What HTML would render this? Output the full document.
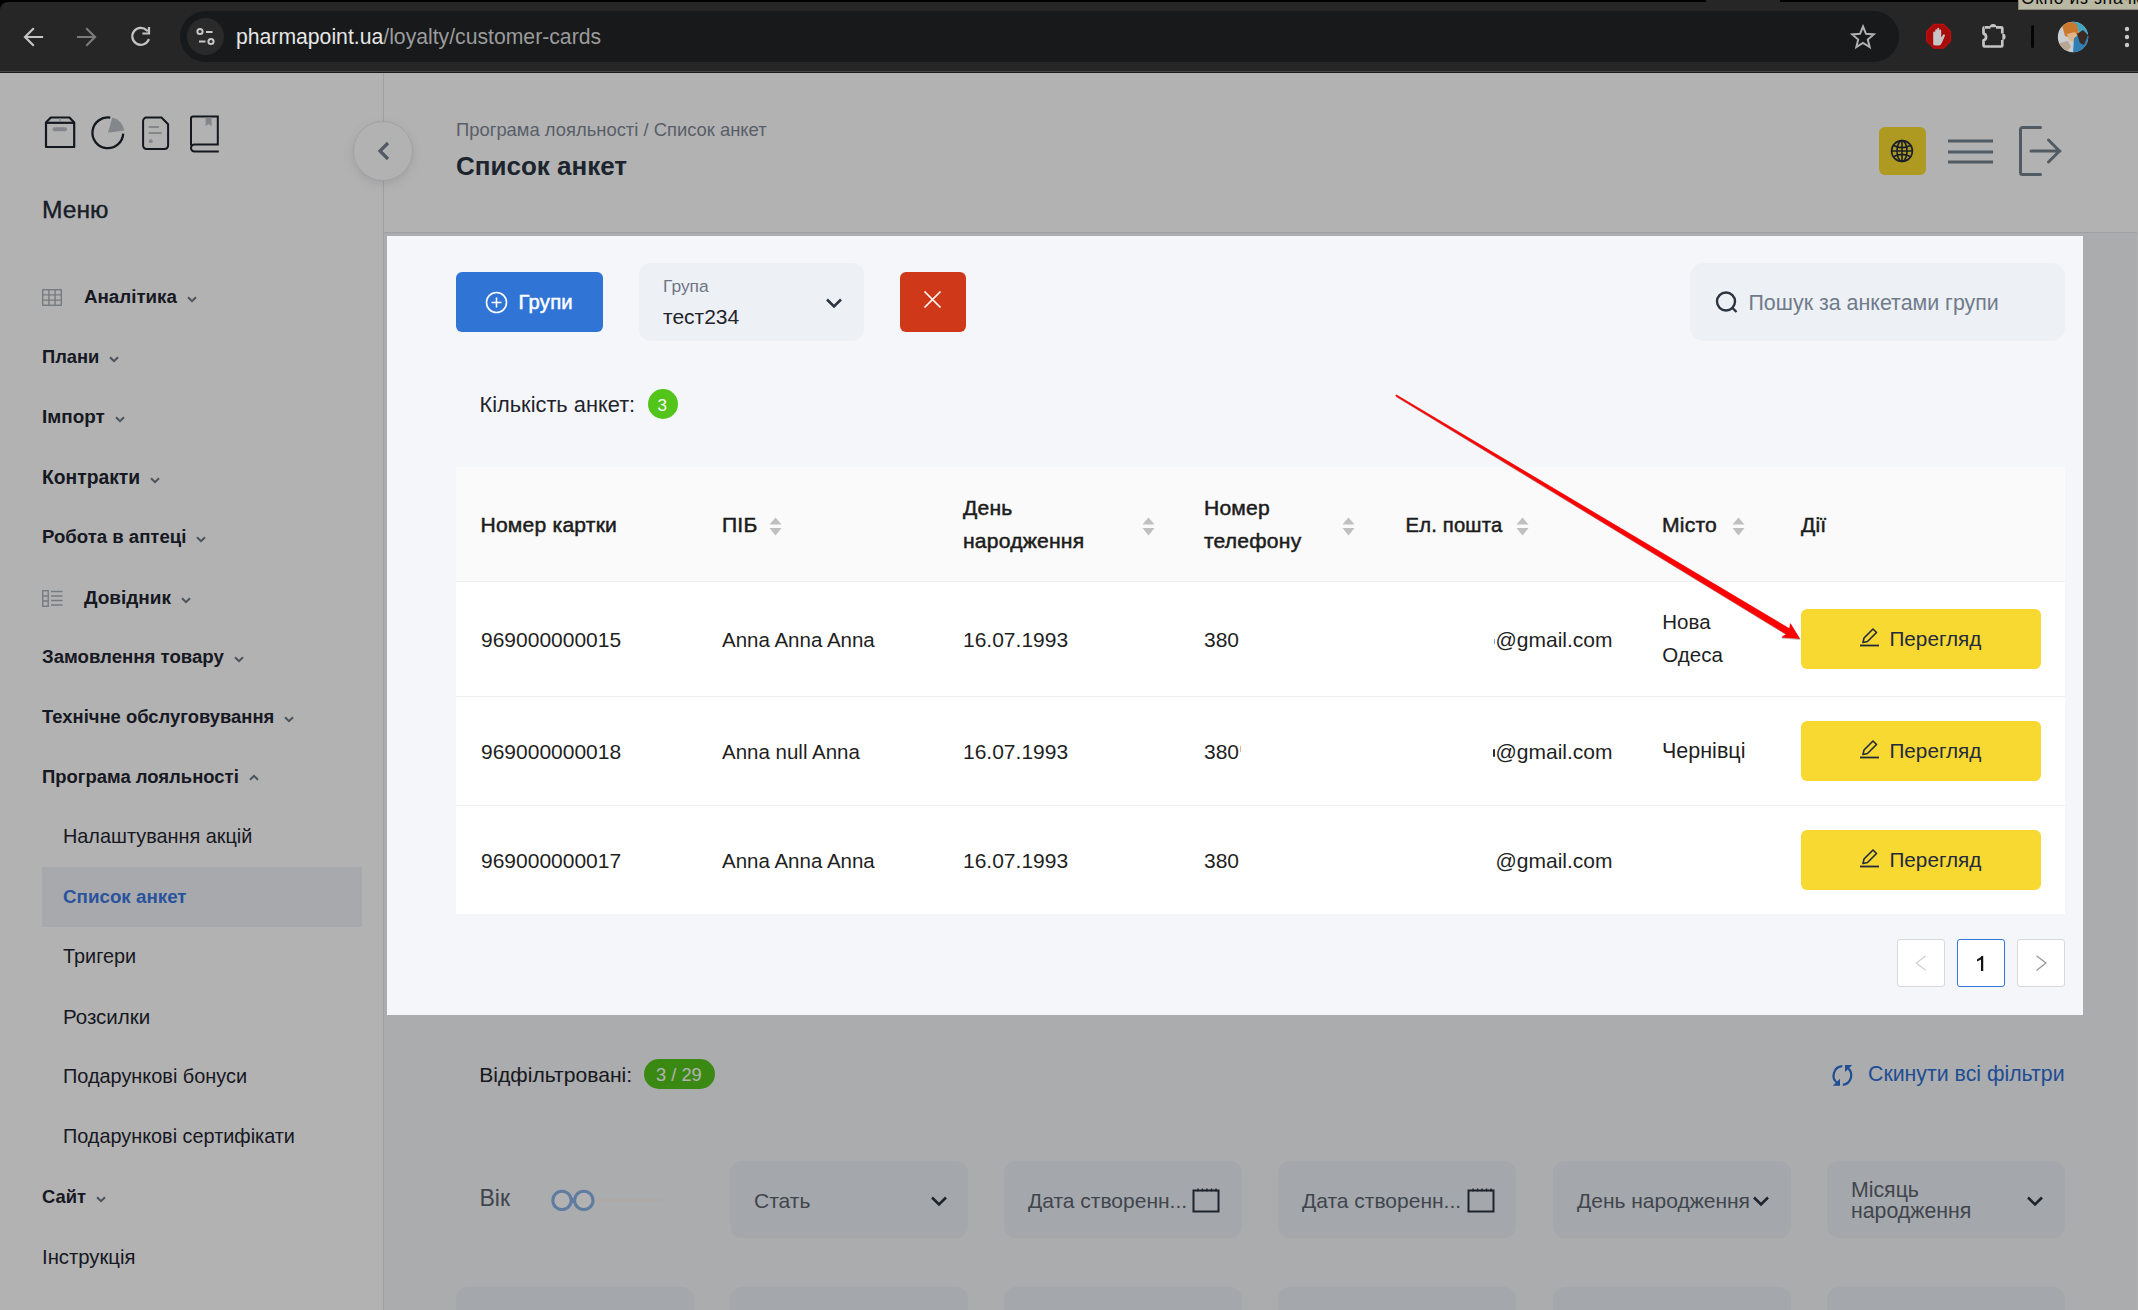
<!DOCTYPE html>
<html><head><meta charset="utf-8">
<style>
*{box-sizing:border-box;margin:0;padding:0}
html,body{width:2138px;height:1310px;overflow:hidden;background:#f5f6f9;font-family:"Liberation Sans",sans-serif;color:#212934}
.a{position:absolute}
.t{position:absolute;white-space:nowrap}
#chrome{position:absolute;left:0;top:0;width:2138px;height:72px;background:#000}
#toolbar{position:absolute;left:0;top:2px;width:2138px;height:70px;background:#262626;border-radius:8px 0 0 0}
#tbline{position:absolute;left:0;top:71px;width:2138px;height:1px;background:#474747}
#omni{position:absolute;left:180px;top:11px;width:1719px;height:51px;border-radius:26px;background:#18191b}
#siteinfo{position:absolute;left:187px;top:18px;width:37px;height:37px;border-radius:50%;background:#2a2a2a}
#url{position:absolute;left:236px;top:24px;font-size:21.2px;line-height:26px;color:#e6e6e6;white-space:nowrap}
#url span{color:#9b9b9b}
#tooltip{position:absolute;left:2018px;top:0;width:120px;height:10px;background:#b9b8a2;border-left:1px solid #8c8b80;border-bottom:1px solid #8c8b80;overflow:hidden}
#tooltip div{position:absolute;left:2px;top:-10px;font-size:17.5px;line-height:17.5px;letter-spacing:0.6px;color:#0a0a0a;white-space:nowrap}
#page{position:absolute;left:0;top:72px;width:2138px;height:1238px;background:#f5f6f9}
#sidebar{position:absolute;left:0;top:0;width:384px;height:1238px;background:#fff;border-right:1px solid #e2e5ea}
#header{position:absolute;left:384px;top:0;width:1754px;height:161px;background:#fff;border-bottom:1px solid #e2e5ea}
#overlay{position:absolute;left:0;top:72px;width:2138px;height:1238px;background:rgba(0,0,0,0.3);z-index:10}
#card{position:absolute;left:387px;top:236px;width:1696px;height:779px;background:#f5f6fa;z-index:20}
.chev{display:inline-block;margin-left:10px;vertical-align:middle;position:relative;top:1px}
.sort{position:absolute;width:12px;height:18px}
.btny{position:absolute;left:1414px;width:240px;height:60px;background:#f7d931;border-radius:6px}
.pg{position:absolute;width:48px;height:48px;border:1px solid #d9d9d9;border-radius:4px;background:#fff}
.fsel{position:absolute;top:1089px;width:238px;height:77px;border-radius:12px;background:#ebf0f5}
</style></head><body>

<div id="chrome">
  <div id="toolbar"></div>
  <div id="tbline"></div>
  <div class="a" style="left:1706px;top:0;width:74px;height:3px;background:#262626;border-radius:0 0 0 0"></div>
  <svg class="a" style="left:0;top:0" width="180" height="72" viewBox="0 0 180 72">
    <g fill="none" stroke-width="2.2" stroke-linecap="square">
      <path d="M42 37H26M33 29l-8 8 8 8" stroke="#c4c4c4"/>
      <path d="M78 37h16M87 29l8 8-8 8" stroke="#7a7a7a"/>
      <path d="M148.5 40a8.5 8.5 0 1 1-1.6-9.6" stroke="#c4c4c4"/>
      <path d="M149 28v5.5h-5.5" stroke="#c4c4c4"/>
    </g>
  </svg>
  <div id="omni"></div>
  <div id="siteinfo"></div>
  <svg class="a" style="left:190px;top:20px" width="32" height="32" viewBox="0 0 32 32">
    <g fill="none" stroke="#c8c8c8" stroke-width="2">
      <circle cx="10" cy="11.5" r="2.6"/><path d="M16 12h6.5"/>
      <circle cx="21" cy="21.5" r="2.6"/><path d="M9 21.5h6.5"/>
    </g>
  </svg>
  <div id="url">pharmapoint.ua<span>/loyalty/customer-cards</span></div>
  <svg class="a" style="left:1850px;top:24px" width="26" height="26" viewBox="0 0 26 26">
    <path d="M13 2.5l3 7.3 7.8.6-6 5.1 1.9 7.6L13 19l-6.7 4.1 1.9-7.6-6-5.1 7.8-.6z" fill="none" stroke="#b0b0b0" stroke-width="2" stroke-linejoin="miter"/>
  </svg>
  <svg class="a" style="left:1924px;top:22px" width="30" height="30" viewBox="1924 22 30 30">
    <path d="M1933.8 24.4h9.6l7.1 7.1v9.6l-7.1 7.1h-9.6l-7.1-7.1v-9.6z" fill="#a90b0b" stroke="#c2100f" stroke-width="1.2"/>
    <path d="M1933.4 45c-.3-1-.2-2-.2-3v-9.4a1 1 0 0 1 2 0V30.2a1 1 0 0 1 2 0v-1.4a1 1 0 0 1 2 0v1.7a1 1 0 0 1 2 0v7l1.8-2.6a1 1 0 0 1 1.8 1l-2.6 6.2c-.8 1.9-1.6 3.4-3.6 3.4h-2.6c-1.2 0-2.3-.2-2.6-.5z" fill="#c6c6c6"/>
  </svg>
  <svg class="a" style="left:1978px;top:20px" width="32" height="32" viewBox="1978 20 32 32">
    <path d="M1985 27.3h5.5M1996 27.3h5.3a1 1 0 0 1 1 1v5.2M2002.3 40v5.5a1 1 0 0 1-1 1h-16.8a1 1 0 0 1-1-1v-5.3a3.4 3.4 0 0 0 0-6.6v-5.3a1 1 0 0 1 1-1" fill="none" stroke="#c4c4c4" stroke-width="2.7" stroke-linejoin="round"/>
    <path d="M1989.8 27.3a3.3 3.3 0 0 1 6.6 0z" fill="#c4c4c4"/>
    <path d="M2002.3 33.4a3.3 3.3 0 0 1 0 6.6z" fill="#c4c4c4"/>
  </svg>
  <div class="a" style="left:2031px;top:25px;width:3px;height:23px;background:#050505;border-radius:1.5px"></div>
  <svg class="a" style="left:2057px;top:21px" width="32" height="32" viewBox="0 0 32 32">
    <defs><clipPath id="avc"><circle cx="16" cy="16" r="15.2"/></clipPath></defs>
    <g clip-path="url(#avc)">
      <rect width="32" height="32" fill="#c9cdd0"/>
      <path d="M14 0h18v14l-6 2z" fill="#45a6c4"/>
      <path d="M5 4c4-4 12-4 15 0l2 9-5 5-9-3z" fill="#c9792e"/>
      <path d="M10 13l8-2 4 6-4 5-6-3z" fill="#e0b48a"/>
      <path d="M17 17l9-6 6 4v8l-8 9h-8z" fill="#2f7fb5"/>
      <path d="M20 13l6-4 5 5-4 10-4-2z" fill="#3a2a22"/>
      <path d="M3 22l8-2 3 6-6 6H0z" fill="#b9a595"/>
    </g>
  </svg>
  <svg class="a" style="left:2120px;top:24px" width="14" height="26" viewBox="0 0 14 26">
    <circle cx="7" cy="5" r="2.2" fill="#c8c8c8"/><circle cx="7" cy="13" r="2.2" fill="#c8c8c8"/><circle cx="7" cy="21" r="2.2" fill="#c8c8c8"/>
  </svg>
  <div id="tooltip"><div>Окно из значка</div></div>
</div>

<div id="page">
  <div id="sidebar">
<svg class="a" style="left:40px;top:40px" width="184" height="42" viewBox="40 112 184 42">
  <g fill="none" stroke="#1c222c" stroke-width="2">
    <path d="M46 122.5L50.8 117.5h18.6l4.8 5v24.5H46z" stroke-width="2.2" stroke-linejoin="round"/><path d="M46 122.8h28.2" stroke-width="2.2"/>
  </g>
  <path d="M60 118v3.5" stroke="#bcc0c6" stroke-width="1.4"/>
  <rect x="52.6" y="127.2" width="14.4" height="4" rx="2" fill="#bcc0c6"/>
  <path d="M110.3 117.6A15.4 15.4 0 1 0 123.2 133.6" fill="none" stroke="#1c222c" stroke-width="2.3"/>
  <path d="M108 132.7L112.4 117.4A15.8 15.8 0 0 1 124.3 130.6z" fill="#bcc0c6"/>
  <path d="M146.5 117.6h15l6.6 6.6v21.4a3.4 3.4 0 0 1-3.4 3.4h-18.2a3.4 3.4 0 0 1-3.4-3.4v-24.6a3.4 3.4 0 0 1 3.4-3.4z" fill="none" stroke="#1c222c" stroke-width="2"/>
  <path d="M148.7 127h10.2M148.7 133h13" stroke="#bcc0c6" stroke-width="2"/>
  <circle cx="150.8" cy="141.2" r="1.9" fill="#bcc0c6"/>
  <path d="M191 145.5V118.5a2 2 0 0 1 2-2h24.8v28H194.5a3.5 3.5 0 0 0 0 7h24.3" fill="none" stroke="#1c222c" stroke-width="2"/>
  <path d="M205.6 117.5h6v8.8l-3-2.4-3 2.4z" fill="#bcc0c6"/>
</svg>
<svg class="a" style="left:42px;top:217px" width="20" height="17" viewBox="0 0 20 17">
  <g fill="none" stroke="#aab0b8" stroke-width="1.4"><rect x="0.7" y="0.7" width="18.6" height="15.6"/><path d="M0.7 5.9h18.6M0.7 11.1h18.6M6.9 0.7v15.6M13.1 0.7v15.6"/></g>
  
</svg>
<svg class="a" style="left:42px;top:518px" width="21" height="17" viewBox="0 0 21 17">
  <g fill="none" stroke="#aab0b8" stroke-width="1.4"><rect x="0.7" y="0.7" width="5.5" height="15.6"/><path d="M0.7 6h5.5M0.7 11h5.5M9 1.5h11.5M9 6h11.5M9 10.5h11.5M9 15h11.5"/></g>
</svg>
<div class="a" style="left:42px;top:795px;width:320px;height:60px;background:#f1f3f7"></div>
<div class="t" style="left:42px;top:126.4px;font-size:24.6px;line-height:24.6px;color:#232b38;-webkit-text-stroke:0.35px #232b38;">Меню</div><div class="t" style="left:84px;top:216.39999999999998px;font-size:18.76px;line-height:18.76px;font-weight:bold;color:#1f2631;">Аналітика<svg class="chev" width="10" height="7" viewBox="0 0 10 7"><path d="M1 1.2l4 4 4-4" fill="none" stroke="#6b7785" stroke-width="2"/></svg></div><div class="t" style="left:42px;top:276.4px;font-size:18.31px;line-height:18.31px;font-weight:bold;color:#1f2631;">Плани<svg class="chev" width="10" height="7" viewBox="0 0 10 7"><path d="M1 1.2l4 4 4-4" fill="none" stroke="#6b7785" stroke-width="2"/></svg></div><div class="t" style="left:42px;top:336.4px;font-size:18.92px;line-height:18.92px;font-weight:bold;color:#1f2631;">Імпорт<svg class="chev" width="10" height="7" viewBox="0 0 10 7"><path d="M1 1.2l4 4 4-4" fill="none" stroke="#6b7785" stroke-width="2"/></svg></div><div class="t" style="left:42px;top:396.4px;font-size:19.3px;line-height:19.3px;font-weight:bold;color:#1f2631;">Контракти<svg class="chev" width="10" height="7" viewBox="0 0 10 7"><path d="M1 1.2l4 4 4-4" fill="none" stroke="#6b7785" stroke-width="2"/></svg></div><div class="t" style="left:42px;top:456.4px;font-size:18.59px;line-height:18.59px;font-weight:bold;color:#1f2631;">Робота в аптеці<svg class="chev" width="10" height="7" viewBox="0 0 10 7"><path d="M1 1.2l4 4 4-4" fill="none" stroke="#6b7785" stroke-width="2"/></svg></div><div class="t" style="left:84px;top:516.4px;font-size:18.99px;line-height:18.99px;font-weight:bold;color:#1f2631;">Довідник<svg class="chev" width="10" height="7" viewBox="0 0 10 7"><path d="M1 1.2l4 4 4-4" fill="none" stroke="#6b7785" stroke-width="2"/></svg></div><div class="t" style="left:42px;top:576.4px;font-size:18.62px;line-height:18.62px;font-weight:bold;color:#1f2631;">Замовлення товару<svg class="chev" width="10" height="7" viewBox="0 0 10 7"><path d="M1 1.2l4 4 4-4" fill="none" stroke="#6b7785" stroke-width="2"/></svg></div><div class="t" style="left:42px;top:636.4px;font-size:18.42px;line-height:18.42px;font-weight:bold;color:#1f2631;">Технічне обслуговування<svg class="chev" width="10" height="7" viewBox="0 0 10 7"><path d="M1 1.2l4 4 4-4" fill="none" stroke="#6b7785" stroke-width="2"/></svg></div><div class="t" style="left:42px;top:696.4px;font-size:18.47px;line-height:18.47px;font-weight:bold;color:#1f2631;">Програма лояльності<svg class="chev" style="top:-1px" width="10" height="7" viewBox="0 0 10 7"><path d="M1 5.8l4-4 4 4" fill="none" stroke="#6b7785" stroke-width="2"/></svg></div><div class="t" style="left:63px;top:755.4px;font-size:19.85px;line-height:19.85px;color:#1f2631;">Налаштування акцій</div><div class="t" style="left:63px;top:816.4px;font-size:18.8px;line-height:18.8px;font-weight:bold;color:#3c78e0;">Список анкет</div><div class="t" style="left:63px;top:875.4px;font-size:19.85px;line-height:19.85px;color:#1f2631;">Тригери</div><div class="t" style="left:63px;top:935.4000000000001px;font-size:20.5px;line-height:20.5px;color:#1f2631;">Розсилки</div><div class="t" style="left:63px;top:995.4000000000001px;font-size:19.9px;line-height:19.9px;color:#1f2631;">Подарункові бонуси</div><div class="t" style="left:63px;top:1055.4px;font-size:19.85px;line-height:19.85px;color:#1f2631;">Подарункові сертифікати</div><div class="t" style="left:42px;top:1116.4px;font-size:18.37px;line-height:18.37px;font-weight:bold;color:#1f2631;">Сайт<svg class="chev" width="10" height="7" viewBox="0 0 10 7"><path d="M1 1.2l4 4 4-4" fill="none" stroke="#6b7785" stroke-width="2"/></svg></div><div class="t" style="left:42px;top:1175.4px;font-size:20.3px;line-height:20.3px;color:#1f2631;">Інструкція</div></div>
  <div id="header">
<svg class="a" style="left:-32px;top:48px;overflow:visible;filter:drop-shadow(0 3px 5px rgba(0,0,0,0.10))" width="64" height="64" viewBox="0 0 64 64">
  <circle cx="31" cy="31" r="29.5" fill="#fff" stroke="#e3e7ed" stroke-width="1"/>
  <path d="M36 23l-8 8 8 8" fill="none" stroke="#75818f" stroke-width="3.2"/>
</svg>
<div class="a" style="left:1495px;top:55px;width:47px;height:48px;border-radius:6px;background:#fadc30"></div>
<svg class="a" style="left:1506.3px;top:67px" width="24" height="24" viewBox="0 0 24 24">
  <g fill="none" stroke="#232c3c" stroke-width="1.6"><circle cx="12" cy="12" r="10.4"/><ellipse cx="12" cy="12" rx="5" ry="10.4"/><path d="M12 1.6v20.8M1.6 12h20.8M3.2 6.2Q12 11 20.8 6.2M3.2 17.8Q12 13 20.8 17.8"/></g>
</svg>
<svg class="a" style="left:1562px;top:66px" width="48" height="28" viewBox="0 0 48 28">
  <path d="M2 3h45M2 14h45M2 24h45" stroke="#75838f" stroke-width="3"/>
</svg>
<svg class="a" style="left:1632px;top:52px" width="50" height="54" viewBox="0 0 50 54">
  <g fill="none" stroke="#75838f" stroke-width="3" stroke-linecap="round" stroke-linejoin="round"><path d="M24.5 3.5H6.5a2 2 0 0 0-2 2v43a2 2 0 0 0 2 2h18"/><path d="M15 27h29M32.5 16l11 11-11 11"/></g>
</svg>
<div class="t" style="left:72px;top:49.400000000000006px;font-size:18.4px;line-height:18.4px;color:#808996;">Програма лояльності / Список анкет</div><div class="t" style="left:72px;top:81.30000000000001px;font-size:26px;line-height:26px;font-weight:bold;color:#2a3443;">Список анкет</div></div>
  <div class="t" style="left:479.3px;top:992px;font-size:21.1px;line-height:21.1px;color:#1f242c;">Відфільтровані:</div><div class="a" style="left:644px;top:987px;width:71px;height:30px;border-radius:15px;background:#52c41a"></div><div class="t" style="left:656px;top:993.5px;font-size:18.3px;line-height:18.3px;color:#fff;">3 / 29</div><svg class="a" style="left:1822px;top:986px" width="40" height="34" viewBox="1822 1058 40 34"><g fill="none" stroke="#2d70d6" stroke-width="2.2"><path d="M1842.3 1066.2A9.4 9.4 0 0 0 1837.2 1083"/><path d="M1842.8 1084.8A9.4 9.4 0 0 0 1847.8 1068.2"/></g><path d="M1832.8 1085.7h7.2v-7z" fill="#2d70d6"/><path d="M1845 1064.9h7.3l-7.3 7z" fill="#2d70d6"/></svg><div class="t" style="left:1868px;top:992.4000000000001px;font-size:21.3px;line-height:21.3px;color:#2d6fd5;">Скинути всі фільтри</div><div class="t" style="left:479.5px;top:1115px;font-size:23px;line-height:23px;color:#59636f;">Вік</div><svg class="a" style="left:540px;top:1108px" width="180" height="42" viewBox="540 1180 180 42"><path d="M598 1200.2h64" stroke="#f6f3ee" stroke-width="3.6" stroke-linecap="round"/><rect x="570" y="1198" width="6" height="5" fill="#88b1e6"/><g fill="#fff" stroke="#88b1e6" stroke-width="3"><circle cx="562" cy="1200.4" r="9.2"/><circle cx="583.8" cy="1200.4" r="9.2"/></g></svg><div class="fsel" style="left:730px"></div><div class="t" style="left:754px;top:1117.6px;font-size:21px;line-height:21px;color:#5c6470;">Стать</div><svg class="a" style="left:930px;top:1123px" width="18" height="12" viewBox="0 0 18 12"><path d="M2 2.5l7 7 7-7" fill="none" stroke="#2c3441" stroke-width="2.6"/></svg><div class="fsel" style="left:1004px"></div><div class="t" style="left:1028px;top:1117.6px;font-size:21px;line-height:21px;color:#5c6470;">Дата створенн...</div><svg class="a" style="left:1192px;top:1115px" width="28" height="26" viewBox="0 0 28 26"><rect x="1.5" y="3.5" width="25" height="21" fill="none" stroke="#2c3441" stroke-width="2"/><path d="M6 1.5v3M10.5 1.5v3M15 1.5v3M19.5 1.5v3M24 1.5v3" stroke="#2c3441" stroke-width="1.4"/></svg><div class="fsel" style="left:1278px"></div><div class="t" style="left:1302px;top:1117.6px;font-size:21px;line-height:21px;color:#5c6470;">Дата створенн...</div><svg class="a" style="left:1467px;top:1115px" width="28" height="26" viewBox="0 0 28 26"><rect x="1.5" y="3.5" width="25" height="21" fill="none" stroke="#2c3441" stroke-width="2"/><path d="M6 1.5v3M10.5 1.5v3M15 1.5v3M19.5 1.5v3M24 1.5v3" stroke="#2c3441" stroke-width="1.4"/></svg><div class="fsel" style="left:1553px"></div><div class="t" style="left:1577px;top:1117.6px;font-size:21px;line-height:21px;color:#5c6470;">День народження</div><svg class="a" style="left:1752px;top:1123px" width="18" height="12" viewBox="0 0 18 12"><path d="M2 2.5l7 7 7-7" fill="none" stroke="#2c3441" stroke-width="2.6"/></svg><div class="fsel" style="left:1827px"></div><div class="t" style="left:1851px;top:1108px;font-size:21.3px;line-height:21.3px;color:#5c6470;">Місяць</div><div class="t" style="left:1851px;top:1128.5px;font-size:21.3px;line-height:21.3px;color:#5c6470;">народження</div><svg class="a" style="left:2026px;top:1123px" width="18" height="12" viewBox="0 0 18 12"><path d="M2 2.5l7 7 7-7" fill="none" stroke="#2c3441" stroke-width="2.6"/></svg><div class="fsel" style="left:456px;top:1215px"></div><div class="fsel" style="left:730px;top:1215px"></div><div class="fsel" style="left:1004px;top:1215px"></div><div class="fsel" style="left:1278px;top:1215px"></div><div class="fsel" style="left:1553px;top:1215px"></div><div class="fsel" style="left:1827px;top:1215px"></div>
</div>
<div class="a" style="left:2137px;top:72px;width:1px;height:1238px;background:#fff"></div>
<div class="a" style="left:0;top:72px;width:2138px;height:1px;background:#1b1b1b;z-index:30"></div>
<div id="overlay"></div>
<div id="card"><div class="a" style="left:69px;top:36px;width:147px;height:60px;background:#3074d5;border-radius:6px"></div><svg class="a" style="left:98px;top:55px" width="23" height="23" viewBox="0 0 23 23"><circle cx="11.5" cy="11.5" r="10" fill="none" stroke="#fff" stroke-width="1.6"/><path d="M11.5 6.5v10M6.5 11.5h10" stroke="#fff" stroke-width="1.6"/></svg><div class="t" style="left:131.5px;top:56.10000000000002px;font-size:20.3px;line-height:20.3px;-webkit-text-stroke:0.5px #fff;letter-spacing:0.2px;color:#fff;">Групи</div><div class="a" style="left:252px;top:27px;width:225px;height:78px;background:#edf0f4;border-radius:12px"></div><div class="t" style="left:276px;top:42.10000000000002px;font-size:17.4px;line-height:17.4px;color:#6d7685;">Група</div><div class="t" style="left:276px;top:70.10000000000002px;font-size:21px;line-height:21px;color:#1f242c;">тест234</div><svg class="a" style="left:438px;top:61px" width="18" height="12" viewBox="0 0 18 12"><path d="M2 2.5l7 7 7-7" fill="none" stroke="#2c3441" stroke-width="2.6"/></svg><div class="a" style="left:513px;top:36px;width:66px;height:60px;background:#d0381a;border-radius:6px"></div><svg class="a" style="left:535px;top:53px" width="21" height="21" viewBox="0 0 21 21"><path d="M2.5 2.5l16 16M18.5 2.5l-16 16" stroke="#fff" stroke-width="1.7"/></svg><div class="a" style="left:1303px;top:27px;width:375px;height:78px;background:#edf0f4;border-radius:14px"></div><svg class="a" style="left:1327px;top:53px" width="26" height="26" viewBox="0 0 26 26"><circle cx="12" cy="12.5" r="9" fill="none" stroke="#2c3441" stroke-width="2.4"/><path d="M18.5 19l4 4" stroke="#2c3441" stroke-width="2.4"/></svg><div class="t" style="left:1361.5px;top:57px;font-size:21.4px;line-height:21.4px;color:#6f7b8b;">Пошук за анкетами групи</div><div class="t" style="left:92.5px;top:157.60000000000002px;font-size:21.8px;line-height:21.8px;color:#1f242c;">Кількість анкет:</div><div class="a" style="left:261px;top:153px;width:30px;height:30px;background:#52c41a;border-radius:50%"></div><div class="t" style="left:270.5px;top:160.5px;font-size:17px;line-height:17px;color:#fff;">3</div><div class="a" style="left:69px;top:231px;width:1609px;height:114px;background:#fafafa"></div><div class="a" style="left:69px;top:345px;width:1609px;height:333px;background:#fff"></div><div class="a" style="left:69px;top:345px;width:1609px;height:1px;background:#f0f0f0"></div><div class="a" style="left:69px;top:460px;width:1609px;height:1px;background:#f0f0f0"></div><div class="a" style="left:69px;top:569px;width:1609px;height:1px;background:#f0f0f0"></div><div class="t" style="left:93.5px;top:278px;font-size:21.1px;line-height:21.1px;-webkit-text-stroke:0.5px #1c1c1c;letter-spacing:0.2px;color:#1c1c1c;">Номер картки</div><div class="t" style="left:335px;top:278px;font-size:21.1px;line-height:21.1px;-webkit-text-stroke:0.5px #1c1c1c;letter-spacing:0.2px;color:#1c1c1c;">ПІБ</div><svg class="a" style="left:382px;top:281px" width="13" height="19" viewBox="0 0 13 19"><path d="M6.5 0.5L12.5 7.5H0.5z" fill="#bfbfbf"/><path d="M6.5 18.5L12.5 11H0.5z" fill="#bfbfbf"/></svg><div class="t" style="left:576px;top:261.1px;font-size:21.1px;line-height:21.1px;-webkit-text-stroke:0.5px #1c1c1c;letter-spacing:0.2px;color:#1c1c1c;">День</div><div class="t" style="left:576px;top:294.29999999999995px;font-size:21.1px;line-height:21.1px;-webkit-text-stroke:0.5px #1c1c1c;letter-spacing:0.2px;color:#1c1c1c;">народження</div><svg class="a" style="left:755px;top:281px" width="13" height="19" viewBox="0 0 13 19"><path d="M6.5 0.5L12.5 7.5H0.5z" fill="#bfbfbf"/><path d="M6.5 18.5L12.5 11H0.5z" fill="#bfbfbf"/></svg><div class="t" style="left:817px;top:261.1px;font-size:21.1px;line-height:21.1px;-webkit-text-stroke:0.5px #1c1c1c;letter-spacing:0.2px;color:#1c1c1c;">Номер</div><div class="t" style="left:817px;top:294.29999999999995px;font-size:21.1px;line-height:21.1px;-webkit-text-stroke:0.5px #1c1c1c;letter-spacing:0.2px;color:#1c1c1c;">телефону</div><svg class="a" style="left:955px;top:281px" width="13" height="19" viewBox="0 0 13 19"><path d="M6.5 0.5L12.5 7.5H0.5z" fill="#bfbfbf"/><path d="M6.5 18.5L12.5 11H0.5z" fill="#bfbfbf"/></svg><div class="t" style="left:1018.5px;top:279px;font-size:20.2px;line-height:20.2px;-webkit-text-stroke:0.5px #1c1c1c;letter-spacing:0.2px;color:#1c1c1c;">Ел. пошта</div><svg class="a" style="left:1129px;top:281px" width="13" height="19" viewBox="0 0 13 19"><path d="M6.5 0.5L12.5 7.5H0.5z" fill="#bfbfbf"/><path d="M6.5 18.5L12.5 11H0.5z" fill="#bfbfbf"/></svg><div class="t" style="left:1275px;top:278px;font-size:21.1px;line-height:21.1px;-webkit-text-stroke:0.5px #1c1c1c;letter-spacing:0.2px;color:#1c1c1c;">Місто</div><svg class="a" style="left:1345px;top:281px" width="13" height="19" viewBox="0 0 13 19"><path d="M6.5 0.5L12.5 7.5H0.5z" fill="#bfbfbf"/><path d="M6.5 18.5L12.5 11H0.5z" fill="#bfbfbf"/></svg><div class="t" style="left:1414px;top:278px;font-size:21.1px;line-height:21.1px;-webkit-text-stroke:0.5px #1c1c1c;letter-spacing:0.2px;color:#1c1c1c;">Дії</div><div class="t" style="left:94px;top:392.9px;font-size:21px;line-height:21px;color:#1f1f1f;">969000000015</div><div class="t" style="left:335px;top:393.9px;font-size:20.5px;line-height:20.5px;color:#1f1f1f;">Anna Anna Anna</div><div class="t" style="left:576px;top:392.9px;font-size:21px;line-height:21px;color:#1f1f1f;">16.07.1993</div><div class="t" style="left:817px;top:392.9px;font-size:21px;line-height:21px;color:#1f1f1f;">380</div><div class="t" style="left:1108.5px;top:392.9px;font-size:21px;line-height:21px;color:#1f1f1f;">@gmail.com</div><div class="a" style="left:1414px;top:373px;width:240px;height:60px;background:#f7d931;border-radius:6px"></div><svg class="a" style="left:1472px;top:390.5px" width="22" height="20" viewBox="0 0 22 20"><path d="M4 15.5l1-4.5 9-9 3.5 3.5-9 9z" fill="none" stroke="#242a3e" stroke-width="1.6" stroke-linejoin="round"/><path d="M1 18.5h19" stroke="#242a3e" stroke-width="1.8"/></svg><div class="t" style="left:1502.5px;top:393px;font-size:20.7px;line-height:20.7px;color:#242a3e;">Перегляд</div><div class="t" style="left:94px;top:504.6px;font-size:21px;line-height:21px;color:#1f1f1f;">969000000018</div><div class="t" style="left:335px;top:505.6px;font-size:20.5px;line-height:20.5px;color:#1f1f1f;">Anna null Anna</div><div class="t" style="left:576px;top:504.6px;font-size:21px;line-height:21px;color:#1f1f1f;">16.07.1993</div><div class="t" style="left:817px;top:504.6px;font-size:21px;line-height:21px;color:#1f1f1f;">380</div><div class="t" style="left:1108.5px;top:504.6px;font-size:21px;line-height:21px;color:#1f1f1f;">@gmail.com</div><div class="a" style="left:1414px;top:485px;width:240px;height:60px;background:#f7d931;border-radius:6px"></div><svg class="a" style="left:1472px;top:502.5px" width="22" height="20" viewBox="0 0 22 20"><path d="M4 15.5l1-4.5 9-9 3.5 3.5-9 9z" fill="none" stroke="#242a3e" stroke-width="1.6" stroke-linejoin="round"/><path d="M1 18.5h19" stroke="#242a3e" stroke-width="1.8"/></svg><div class="t" style="left:1502.5px;top:505px;font-size:20.7px;line-height:20.7px;color:#242a3e;">Перегляд</div><div class="t" style="left:94px;top:613.8px;font-size:21px;line-height:21px;color:#1f1f1f;">969000000017</div><div class="t" style="left:335px;top:614.8px;font-size:20.5px;line-height:20.5px;color:#1f1f1f;">Anna Anna Anna</div><div class="t" style="left:576px;top:613.8px;font-size:21px;line-height:21px;color:#1f1f1f;">16.07.1993</div><div class="t" style="left:817px;top:613.8px;font-size:21px;line-height:21px;color:#1f1f1f;">380</div><div class="t" style="left:1108.5px;top:613.8px;font-size:21px;line-height:21px;color:#1f1f1f;">@gmail.com</div><div class="a" style="left:1414px;top:594px;width:240px;height:60px;background:#f7d931;border-radius:6px"></div><svg class="a" style="left:1472px;top:611.5px" width="22" height="20" viewBox="0 0 22 20"><path d="M4 15.5l1-4.5 9-9 3.5 3.5-9 9z" fill="none" stroke="#242a3e" stroke-width="1.6" stroke-linejoin="round"/><path d="M1 18.5h19" stroke="#242a3e" stroke-width="1.8"/></svg><div class="t" style="left:1502.5px;top:614px;font-size:20.7px;line-height:20.7px;color:#242a3e;">Перегляд</div><div class="t" style="left:1275.3px;top:376.29999999999995px;font-size:20.5px;line-height:20.5px;color:#1f1f1f;">Нова</div><div class="t" style="left:1275.3px;top:409.4px;font-size:20.5px;line-height:20.5px;color:#1f1f1f;">Одеса</div><div class="t" style="left:1275px;top:504.6px;font-size:21.5px;line-height:21.5px;color:#1f1f1f;">Чернівці</div><div class="a" style="left:1107px;top:403px;width:1px;height:5px;background:#4b95e6;opacity:.8"></div><div class="a" style="left:1106px;top:513px;width:2px;height:8px;background:#2a2f3a;border-radius:1px"></div><div class="a" style="left:853px;top:510px;width:1px;height:6px;background:#e0a860;opacity:.8"></div><div class="a" style="left:1510px;top:703px;width:48px;height:48px;background:#fff;border:1px solid #d9d9d9;border-radius:3px"></div><div class="a" style="left:1570px;top:703px;width:48px;height:48px;background:#fff;border:1.5px solid #2f74d6;border-radius:3px"></div><div class="a" style="left:1630px;top:703px;width:48px;height:48px;background:#fff;border:1px solid #d9d9d9;border-radius:3px"></div><svg class="a" style="left:1583px;top:714px" width="20" height="26" viewBox="1970 950 20 26"><path d="M1982.1 956.2V971" stroke="#141414" stroke-width="2.3"/><path d="M1983.2 955.6L1977 959.4v2.1l5.2-2.6z" fill="#141414"/></svg><svg class="a" style="left:1523px;top:714px" width="40" height="26" viewBox="1910 950 40 26"><path d="M1925.8 955.7L1916.3 963l9.5 7.4" fill="none" stroke="#d2d2d2" stroke-width="1.3"/></svg><svg class="a" style="left:1643px;top:714px" width="40" height="26" viewBox="2030 950 40 26"><path d="M2036.5 955.7l9.4 7.3-9.4 7.4" fill="none" stroke="#989898" stroke-width="1.3"/></svg><svg class="a" style="left:0;top:0" width="1696" height="779" viewBox="387 236 1696 779">
<polygon points="1396.4,394.9 1789.6,628.8 1790.4,623.7 1799.5,638.5 1781.9,637.2 1786.4,634.2 1395.8,395.9" fill="#503030" opacity=".35" transform="translate(0.6 1)" stroke="#503030" stroke-width="0.8" stroke-linejoin="round"/><polygon points="1396.4,394.9 1789.6,628.8 1790.4,623.7 1799.5,638.5 1781.9,637.2 1786.4,634.2 1395.8,395.9" fill="#ff0000" stroke="#f20000" stroke-width="0.7" stroke-linejoin="round"/>
</svg></div>
</body></html>
